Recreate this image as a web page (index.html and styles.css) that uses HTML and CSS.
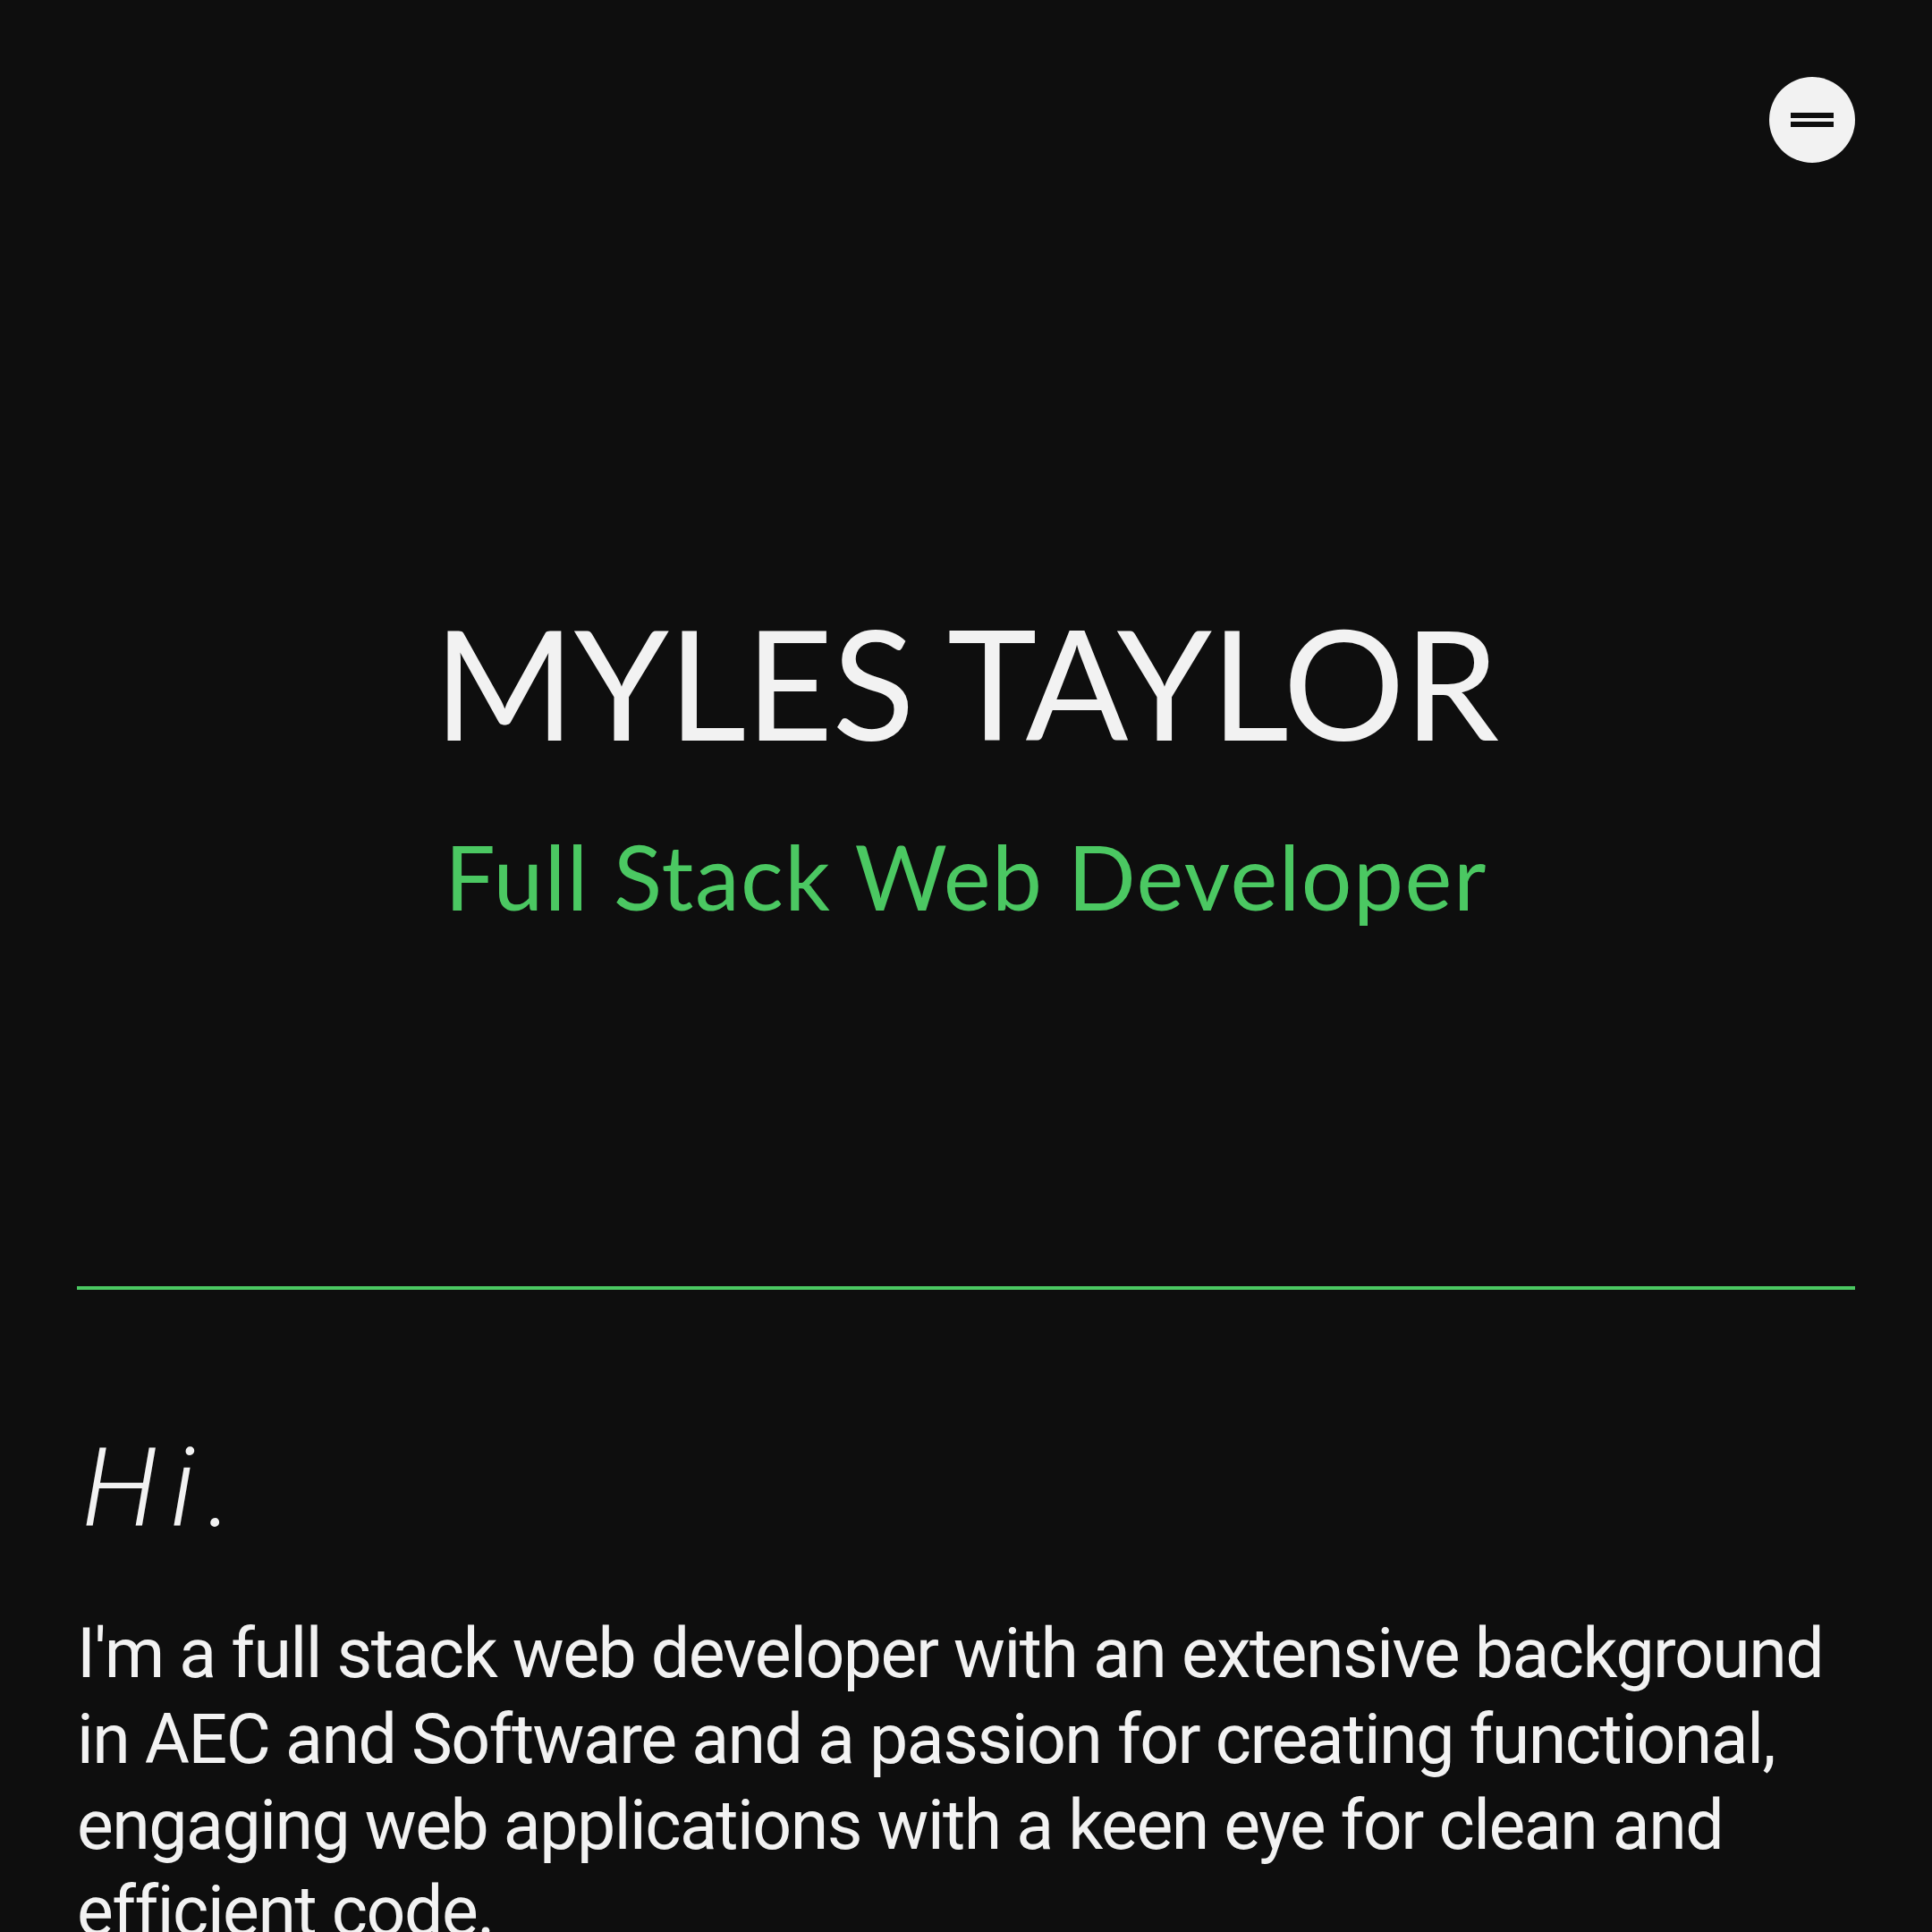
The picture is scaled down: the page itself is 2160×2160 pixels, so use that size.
FILE: index.html
```html
<!DOCTYPE html>
<html lang="en">
<head>
<meta charset="utf-8">
<title>Myles Taylor</title>
<link rel="stylesheet" href="styles.css">
</head>
<body>
<div class="page">
  <header class="topbar">
    <button class="menu-btn" aria-label="Menu">
      <span class="bar"></span>
      <span class="bar"></span>
    </button>
  </header>
  <section class="hero">
    <h1 class="name">MYLES TAYLOR</h1>
    <h2 class="role">Full Stack Web Developer</h2>
  </section>
  <hr class="divider">
  <section class="about">
    <h3 class="hi">Hi.</h3>
    <p class="intro">I'm a full stack web developer with an extensive background in AEC and Software and a passion for creating functional, engaging web applications with a keen eye for clean and efficient code.</p>
  </section>
</div>
</body>
</html>
```

FILE: styles.css
```css
html, body {
  margin: 0;
  padding: 0;
  background: #0e0e0e;
  color: #f2f2f2;
}

.page {
  padding: 0 86px;
  min-height: 2160px;
  box-sizing: border-box;
}

.topbar {
  display: flex;
  justify-content: flex-end;
  padding-top: 86px;
}

.menu-btn {
  width: 96px;
  height: 96px;
  border-radius: 50%;
  border: none;
  background: #f2f2f2;
  padding: 0;
  display: flex;
  flex-direction: column;
  align-items: center;
  justify-content: center;
  gap: 4px;
  cursor: pointer;
}

.menu-btn .bar {
  display: block;
  width: 48px;
  height: 6px;
  background: #0e0e0e;
}

.hero {
  display: flex;
  flex-direction: column;
  align-items: center;
  padding-top: 495px;
}

.name {
  margin: 0;
  font-family: "Lato", "Noto Sans", sans-serif;
  font-weight: 400;
  font-size: 170px;
  line-height: 1;
  letter-spacing: -1px;
  color: #f2f2f2;
}

.role {
  margin: 82px 0 0;
  font-family: "Lato", "Noto Sans", sans-serif;
  font-weight: 400;
  font-size: 100px;
  line-height: 1;
  letter-spacing: 1.5px;
  color: #4bc862;
}

.divider {
  margin: 409px 0 0;
  border: none;
  height: 4px;
  background: #4bc862;
}

.hi {
  margin: 162px 0 0;
  padding-left: 6px;
  font-family: "Roboto", sans-serif;
  font-weight: 300;
  font-style: italic;
  font-size: 122px;
  line-height: 1;
  letter-spacing: 15px;
  color: #f2f2f2;
}

.intro {
  margin: 75px 0 0;
  font-family: "Roboto", sans-serif;
  font-weight: 400;
  font-size: 77px;
  line-height: 96px;
  letter-spacing: -1.5px;
  color: #f2f2f2;
}
```
